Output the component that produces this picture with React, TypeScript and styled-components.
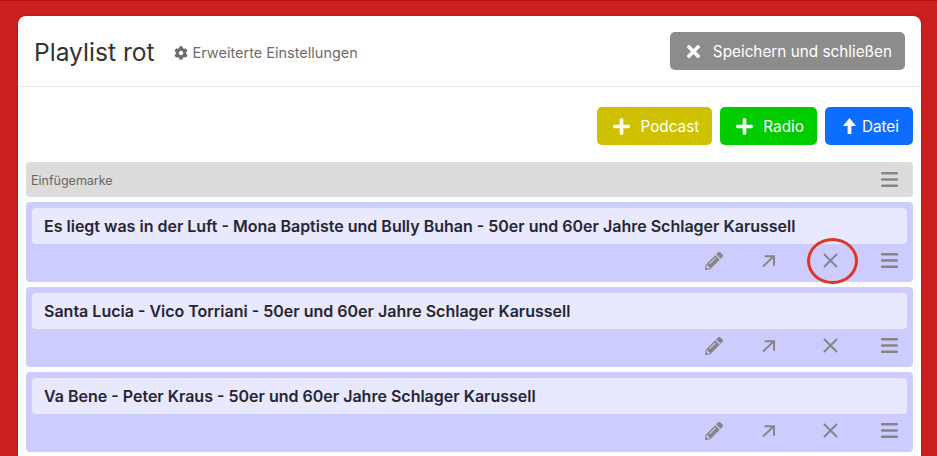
import React from 'react'
import styled, { createGlobalStyle } from 'styled-components'
import { FaCog, FaPencilAlt, FaPlus, FaTimes } from 'react-icons/fa'

const GlobalStyle = createGlobalStyle`
  html, body {
    margin: 0;
    height: 456px;
    overflow: hidden;
    background: #cc201e;
    font-family: Inter, "Liberation Sans", sans-serif;
  }
`

const Page = styled.div`
  height: 456px;
  padding: 15px 16px 0 18px;
  box-sizing: border-box;
  overflow: hidden;
  border-top: 1px solid #b30f0f;
`

const Card = styled.div`
  height: 440px;
  background: #fff;
  border-radius: 8px 8px 0 0;
  box-shadow: 0 0 3px rgba(0, 0, 0, 0.25);
`

const Header = styled.header`
  height: 71px;
  box-sizing: border-box;
  padding: 0 16px;
  display: flex;
  align-items: center;
  border-bottom: 1px solid #e6e6e6;
`

const Title = styled.h1`
  margin: 2px 0 0;
  font-size: 24.6px;
  font-weight: 400;
  color: #333;
`

const SettingsLink = styled.span`
  margin: 3px 0 0 19px;
  display: flex;
  align-items: center;
  gap: 5px;
  font-size: 14.5px;
  color: #6c6c6c;
`

const Button = styled.button<{ $bg: string }>`
  height: 38px;
  border: 0;
  border-radius: 5px;
  padding: 0 13px 0 15px;
  display: inline-flex;
  align-items: center;
  gap: 9px;
  font: 400 15.3px Inter, "Liberation Sans", sans-serif;
  color: #fff;
  background: ${p => p.$bg};
`

const SaveButton = styled(Button)`
  margin-left: auto;
  padding: 0 13px 0 14px;
  gap: 10px;
`

const UploadButton = styled(Button)`
  padding: 0 14px 0 18px;
  gap: 6px;
`

const Toolbar = styled.div`
  padding: 20px 8px 17px;
  display: flex;
  justify-content: flex-end;
  gap: 8px;
`

const List = styled.div`
  padding: 0 8px;
  display: flex;
  flex-direction: column;
  gap: 5px;
`

const Marker = styled.div`
  height: 35px;
  box-sizing: border-box;
  padding: 0 15px 0 5px;
  display: flex;
  align-items: center;
  justify-content: space-between;
  background: #dcdcdc;
  border-radius: 4px;
  font-size: 12.5px;
  color: #666;
`

const MarkerLabel = styled.span`
  padding-top: 2px;
`

const MarkerHandle = styled.span`
  display: flex;
  color: #868686;
`

const Item = styled.div`
  height: 80px;
  box-sizing: border-box;
  padding: 6px 6px 0;
  background: #ccccff;
  border-radius: 4px;
`

const ItemTitle = styled.div`
  height: 36px;
  box-sizing: border-box;
  padding: 0 12px;
  display: flex;
  align-items: center;
  background: #e8e8ff;
  border-radius: 4px;
  font-size: 16px;
  font-weight: 600;
  color: #262633;
`

const Actions = styled.div`
  height: 33px;
  display: flex;
  align-items: center;
  color: #868686;
  position: relative;
`

const ActionIcon = styled.span<{ $right: number }>`
  position: absolute;
  right: ${p => p.$right}px;
  display: flex;
`

const Highlight = styled.span`
  position: absolute;
  right: 49px;
  top: -6px;
  width: 51px;
  height: 46px;
  box-sizing: border-box;
  border: 3px solid #e0361f;
  border-radius: 50%;
`

const Bars = () => (
  <svg width="17" height="17" viewBox="0 0 17 17" fill="currentColor">
    <rect y="1" width="17" height="2.6" rx="1" />
    <rect y="7.2" width="17" height="2.6" rx="1" />
    <rect y="13.4" width="17" height="2.6" rx="1" />
  </svg>
)

const ThinArrow = () => (
  <svg width="13" height="12" viewBox="0 0 13 12" fill="none" stroke="currentColor" strokeWidth="2">
    <path d="M1 11.5 11.6 1.4M2.6 1.2H12V10.8" />
  </svg>
)

const ThinCross = () => (
  <svg width="15" height="15" viewBox="0 0 15 15" fill="none" stroke="currentColor" strokeWidth="1.9">
    <path d="M1 1 14 14M14 1 1 14" />
  </svg>
)

const UploadArrow = () => (
  <svg width="13" height="16" viewBox="0 0 13 16" fill="currentColor">
    <path d="M6.5 0 13 8H8.4V16H4.6V8H0Z" />
  </svg>
)

const tracks = [
  'Es liegt was in der Luft - Mona Baptiste und Bully Buhan - 50er und 60er Jahre Schlager Karussell',
  'Santa Lucia - Vico Torriani - 50er und 60er Jahre Schlager Karussell',
  'Va Bene - Peter Kraus - 50er und 60er Jahre Schlager Karussell',
]

export default function App() {
  return (
    <Page>
      <GlobalStyle />
      <Card>
        <Header>
          <Title>Playlist rot</Title>
          <SettingsLink>
            <FaCog size={14} />
            Erweiterte Einstellungen
          </SettingsLink>
          <SaveButton $bg="#8c8c8c">
            <FaTimes size={19} />
            Speichern und schließen
          </SaveButton>
        </Header>
        <Toolbar>
          <Button $bg="#cfc100">
            <FaPlus size={19} />
            Podcast
          </Button>
          <Button $bg="#00cc00">
            <FaPlus size={19} />
            Radio
          </Button>
          <UploadButton $bg="#0d6efd">
            <UploadArrow />
            Datei
          </UploadButton>
        </Toolbar>
        <List>
          <Marker>
            <MarkerLabel>Einfügemarke</MarkerLabel>
            <MarkerHandle>
              <Bars />
            </MarkerHandle>
          </Marker>
          {tracks.map((track, i) => (
            <Item key={track}>
              <ItemTitle>{track}</ItemTitle>
              <Actions>
                <ActionIcon $right={184}>
                  <FaPencilAlt size={18} />
                </ActionIcon>
                <ActionIcon $right={132}>
                  <ThinArrow />
                </ActionIcon>
                <ActionIcon $right={69}>
                  <ThinCross />
                </ActionIcon>
                <ActionIcon $right={9}>
                  <Bars />
                </ActionIcon>
                {i === 0 && <Highlight />}
              </Actions>
            </Item>
          ))}
        </List>
      </Card>
    </Page>
  )
}
